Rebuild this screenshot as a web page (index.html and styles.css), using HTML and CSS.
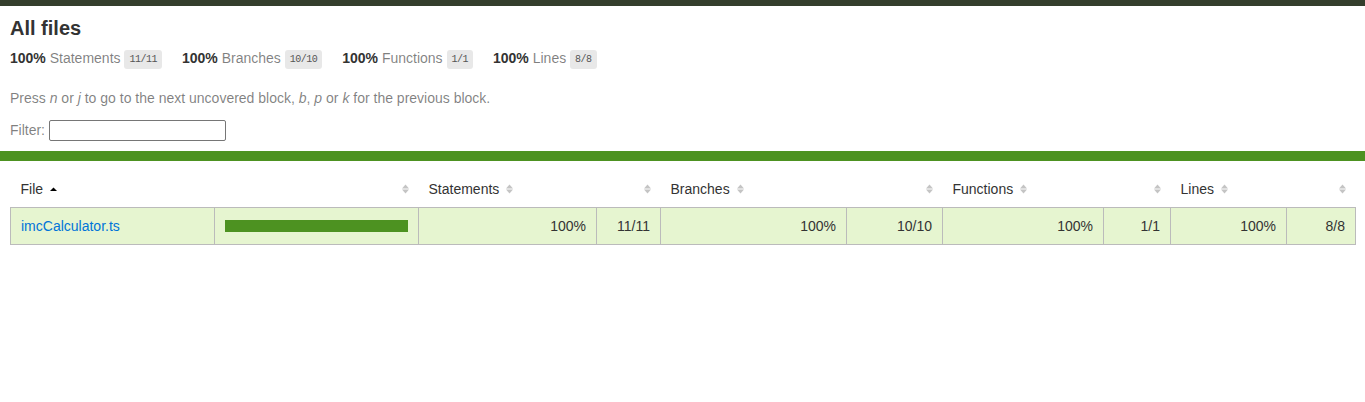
FILE: index.html
```html
<!doctype html>
<html lang="en">
<head>
<meta charset="utf-8">
<title>Code coverage report for All files</title>
<link rel="stylesheet" href="styles.css">
</head>
<body>
<div class="topbar"></div>
<div class="wrapper">
  <div class="pad1">
    <h1>All files</h1>
    <div class="clearfix">
      <div class="fl pad1y space-right2">
        <span class="strong">100% </span>
        <span class="quiet">Statements</span>
        <span class="fraction">11/11</span>
      </div>
      <div class="fl pad1y space-right2">
        <span class="strong">100% </span>
        <span class="quiet">Branches</span>
        <span class="fraction">10/10</span>
      </div>
      <div class="fl pad1y space-right2">
        <span class="strong">100% </span>
        <span class="quiet">Functions</span>
        <span class="fraction">1/1</span>
      </div>
      <div class="fl pad1y space-right2">
        <span class="strong">100% </span>
        <span class="quiet">Lines</span>
        <span class="fraction">8/8</span>
      </div>
    </div>
    <p class="quiet">
      Press <em>n</em> or <em>j</em> to go to the next uncovered block, <em>b</em>, <em>p</em> or <em>k</em> for the previous block.
    </p>
    <div class="quiet">
      Filter:
      <input type="search" class="file-search">
    </div>
  </div>
  <div class="status-line high"></div>
  <div class="pad1">
    <table class="coverage-summary">
      <colgroup>
        <col class="c-file"><col class="c-pic">
        <col class="c-stmt"><col class="c-stmt-abs">
        <col class="c-br"><col class="c-br-abs">
        <col class="c-fn"><col class="c-fn-abs">
        <col class="c-ln"><col class="c-ln-abs">
      </colgroup>
      <thead>
        <tr>
          <th class="file sorted">File<span class="sorter"><svg width="7" height="10" viewBox="0 0 7 10"><path d="M0 7 L3.5 3.5 L7 7 Z" fill="#000"/></svg></span></th>
          <th class="pic"><span class="sorter"><svg width="7" height="10" viewBox="0 0 7 10"><path d="M0 4.5 L3.5 0.5 L7 4.5 Z M0 5.5 L3.5 9.5 L7 5.5 Z" fill="#c4c4c4"/></svg></span></th>
          <th class="pct">Statements<span class="sorter"><svg width="7" height="10" viewBox="0 0 7 10"><path d="M0 4.5 L3.5 0.5 L7 4.5 Z M0 5.5 L3.5 9.5 L7 5.5 Z" fill="#c4c4c4"/></svg></span></th>
          <th class="abs"><span class="sorter"><svg width="7" height="10" viewBox="0 0 7 10"><path d="M0 4.5 L3.5 0.5 L7 4.5 Z M0 5.5 L3.5 9.5 L7 5.5 Z" fill="#c4c4c4"/></svg></span></th>
          <th class="pct">Branches<span class="sorter"><svg width="7" height="10" viewBox="0 0 7 10"><path d="M0 4.5 L3.5 0.5 L7 4.5 Z M0 5.5 L3.5 9.5 L7 5.5 Z" fill="#c4c4c4"/></svg></span></th>
          <th class="abs"><span class="sorter"><svg width="7" height="10" viewBox="0 0 7 10"><path d="M0 4.5 L3.5 0.5 L7 4.5 Z M0 5.5 L3.5 9.5 L7 5.5 Z" fill="#c4c4c4"/></svg></span></th>
          <th class="pct">Functions<span class="sorter"><svg width="7" height="10" viewBox="0 0 7 10"><path d="M0 4.5 L3.5 0.5 L7 4.5 Z M0 5.5 L3.5 9.5 L7 5.5 Z" fill="#c4c4c4"/></svg></span></th>
          <th class="abs"><span class="sorter"><svg width="7" height="10" viewBox="0 0 7 10"><path d="M0 4.5 L3.5 0.5 L7 4.5 Z M0 5.5 L3.5 9.5 L7 5.5 Z" fill="#c4c4c4"/></svg></span></th>
          <th class="pct">Lines<span class="sorter"><svg width="7" height="10" viewBox="0 0 7 10"><path d="M0 4.5 L3.5 0.5 L7 4.5 Z M0 5.5 L3.5 9.5 L7 5.5 Z" fill="#c4c4c4"/></svg></span></th>
          <th class="abs"><span class="sorter"><svg width="7" height="10" viewBox="0 0 7 10"><path d="M0 4.5 L3.5 0.5 L7 4.5 Z M0 5.5 L3.5 9.5 L7 5.5 Z" fill="#c4c4c4"/></svg></span></th>
        </tr>
      </thead>
      <tbody>
        <tr>
          <td class="file high"><a href="#">imcCalculator.ts</a></td>
          <td class="pic high"><div class="chart"><div class="cover-fill cover-full"></div></div></td>
          <td class="pct high">100%</td>
          <td class="abs high">11/11</td>
          <td class="pct high">100%</td>
          <td class="abs high">10/10</td>
          <td class="pct high">100%</td>
          <td class="abs high">1/1</td>
          <td class="pct high">100%</td>
          <td class="abs high">8/8</td>
        </tr>
      </tbody>
    </table>
  </div>
</div>
</body>
</html>
```

FILE: styles.css
```css
*, *:after, *:before { box-sizing: border-box; }
html, body { margin: 0; padding: 0; height: 100%; }
body {
  font-family: "Helvetica Neue", Helvetica, Arial, "Liberation Sans", sans-serif;
  font-size: 14px;
  color: #333;
  background: #fff;
}
.topbar { height: 6px; background: #343e2c; }
h1 { font-size: 20px; line-height: 24px; margin: 0; }
a { color: #0074D9; text-decoration: none; }
.strong { font-weight: bold; }
.pad1 { padding: 10px; }
.pad1y { padding: 10px 0; }
.space-right2 { padding-right: 20px; }
.clearfix { display: block; }
.clearfix:after { content: ''; display: block; height: 0; clear: both; visibility: hidden; }
.fl { float: left; }
.quiet { color: rgba(0, 0, 0, 0.5); }
.fraction {
  font-family: Consolas, "Liberation Mono", Menlo, Courier, monospace;
  font-size: 10px;
  letter-spacing: -0.5px;
  color: #555;
  background: #E8E8E8;
  padding: 4px 5px;
  border-radius: 3px;
  vertical-align: middle;
}
.file-search {
  width: 177px;
  height: 21px;
  border: 1px solid #767676;
  border-radius: 2px;
  padding: 1px 2px;
  font-size: 13.33px;
  vertical-align: baseline;
  background: #fff;
}
.status-line { height: 10px; }
.status-line.high { background: rgb(77, 146, 33); }
.coverage-summary { border-collapse: collapse; width: 100%; table-layout: fixed; }
.c-file { width: 204px; }
.c-pic { width: 204px; }
.c-stmt { width: 178px; }
.c-stmt-abs { width: 64px; }
.c-br { width: 186px; }
.c-br-abs { width: 96px; }
.c-fn { width: 161px; }
.c-fn-abs { width: 67px; }
.c-ln { width: 116px; }
.c-ln-abs { width: 69px; }
.coverage-summary tr { border-bottom: 1px solid #bbb; }
.coverage-summary td, .coverage-summary th { padding: 10px; }
.coverage-summary tbody { border: 1px solid #bbb; }
.coverage-summary td { border-right: 1px solid #bbb; }
.coverage-summary td:last-child { border-right: none; }
.coverage-summary th {
  text-align: left;
  font-weight: normal;
  white-space: nowrap;
}
.coverage-summary th.pic,
.coverage-summary th.abs,
.coverage-summary td.pct,
.coverage-summary td.abs { text-align: right; }
.coverage-summary td.file { white-space: nowrap; }
.sorter {
  display: inline-block;
  width: 7px;
  height: 10px;
  margin-left: 0.5em;
  line-height: 0;
}
.sorter svg { display: block; }
.high { background: rgb(230, 245, 208); }
.chart { line-height: 0; }
.cover-fill { display: inline-block; height: 12px; width: 100%; }
.high .cover-fill { background: rgb(77, 146, 33); }
```
